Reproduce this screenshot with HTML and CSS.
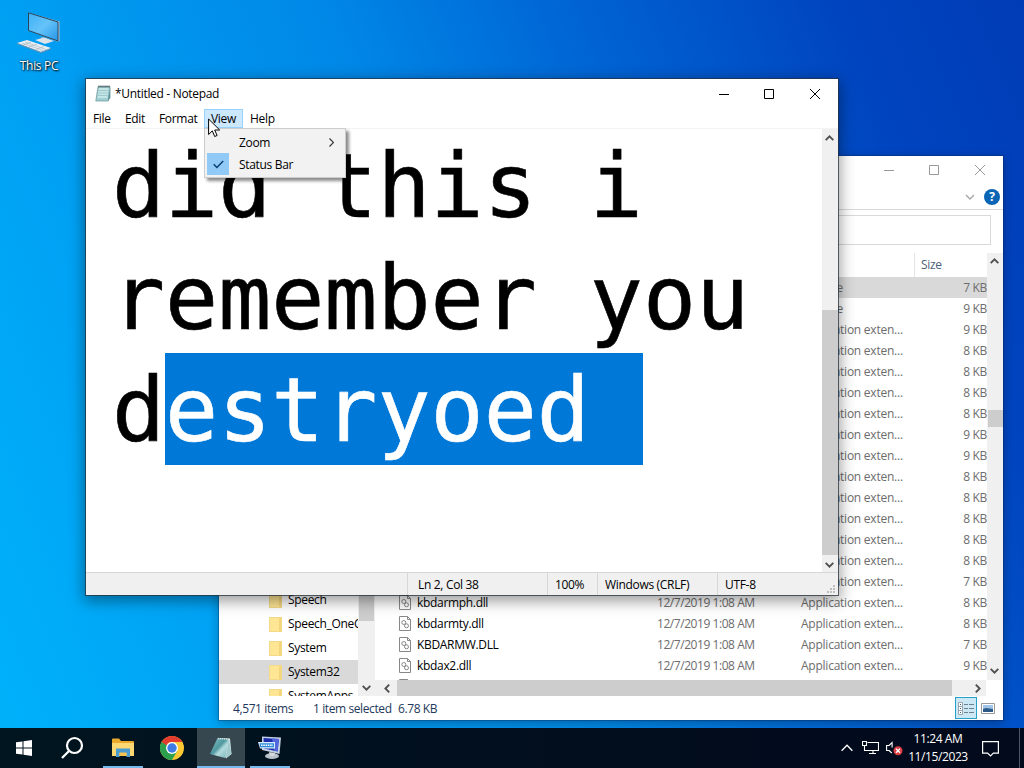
FILE: index.html
```html
<!DOCTYPE html>
<html lang="en">

<head>
  <meta charset="UTF-8">
  <meta name="viewport" content="width=device-width, initial-scale=1.0">
  <title>Desktop</title>
  <link rel="stylesheet" href="styles.css">
</head>

<body>
  <div class="desktop">

    <div class="shortcut">
      <svg width="44" height="42" viewBox="0 0 44 42">
        <defs>
          <linearGradient id="screen" x1="0" y1="0" x2="1" y2="1">
            <stop offset="0" stop-color="#3db0f5"/>
            <stop offset=".5" stop-color="#65c3fa"/>
            <stop offset="1" stop-color="#2396e8"/>
          </linearGradient>
        </defs>
        <path d="M11.500 .5L42.500 9.500V29L40 29.500L11.500 18.500z" fill="#b9c4cc"/>
        <path d="M11.500 .8L41 10V29L11.500 18.500z" fill="url(#screen)" stroke="#27445c"/>
        <path d="M24 25L31 27V30L24 28z" fill="#9aabb8"/>
        <path d="M18 28L27 25.500L37 29L28 32z" fill="#dde3e8"/>
        <path d="M0 31L10 28L34 36L24 40z" fill="#e9eef2"/>
        <path d="M0 31L24 40L34 36V37L24 41L0 32z" fill="#7391a8"/>
        <path d="M5 31L26 38.500M8 30L29 37.500M6 33L14 30M12 35L20 32M19 37.500L27 34.500" stroke="#a9b9c5" stroke-width=".7"/>
      </svg>
      <span>This PC</span>
    </div>

    <!-- explorer -->
    <div class="window explorer">
      <div class="ex-title">
        <svg class="caption" width="103" height="12" viewBox="0 0 103 12">
          <path d="M0 6.500H10M45.500 1.500h9v9h-9zM91 1l10 10M101 1l-10 10" fill="none" stroke="#999"/>
        </svg>
      </div>
      <div class="ribbon">
        <svg width="10" height="7" viewBox="0 0 10 7"><path d="M1 1l4 4 4-4" fill="none" stroke="#aaa" stroke-width="1.500"/></svg>
        <span class="help">?</span>
      </div>
      <div class="address"><div class="search"></div></div>
      <div class="ex-main">
        <div class="tree">
          <ul class="folders">
            <li><i class="folder"></i>Speech</li>
            <li><i class="folder"></i>Speech_OneCore</li>
            <li><i class="folder"></i>System</li>
            <li class="current"><i class="folder"></i>System32</li>
            <li><i class="folder"></i>SystemApps</li>
          </ul>
          <div class="scroll tree-scroll">
            <div class="thumb"></div>
            <svg width="9" height="6" viewBox="0 0 9 6"><path d="M.7 .8l3.800 3.800 3.800-3.800" fill="none" stroke="#505050" stroke-width="1.900"/></svg>
          </div>
        </div>
        <div class="files">
          <div class="files-body">
            <div class="list">
              <div class="head"><span></span><span></span><span></span><span class="size-head">Size</span></div>
              <div id="rows"></div>
            </div>
            <div class="scroll file-scroll">
              <svg width="9" height="6" viewBox="0 0 9 6"><path d="M.7 5.200l3.800-3.800 3.800 3.800" fill="none" stroke="#505050" stroke-width="1.900"/></svg>
              <div class="thumb"></div>
              <svg width="9" height="6" viewBox="0 0 9 6"><path d="M.7 .8l3.800 3.800 3.800-3.800" fill="none" stroke="#505050" stroke-width="1.900"/></svg>
            </div>
          </div>
          <div class="h-scroll">
            <svg width="6" height="9" viewBox="0 0 6 9"><path d="M5.200 .7L1.400 4.500l3.800 3.800" fill="none" stroke="#505050" stroke-width="1.900"/></svg>
            <div class="thumb"></div>
            <svg width="6" height="9" viewBox="0 0 6 9"><path d="M.8 .7l3.800 3.800L.8 8.300" fill="none" stroke="#505050" stroke-width="1.900"/></svg>
          </div>
        </div>
      </div>
      <div class="ex-status">
        <span class="count">4,571 items</span>
        <span class="selected">1 item selected</span>
        <span>6.78 KB</span>
        <div class="views">
          <span class="view on">
            <svg width="16" height="13" viewBox="0 0 16 13"><path d="M.5 .5h4v12h-4zM.5 4.500h4M.5 8.500h4" fill="#fff" stroke="#9aa5ad"/><path d="M2 2.500h1M2 6.500h1M2 10.500h1" stroke="#37617d"/><path d="M6 2.500h4M11 2.500h5M6 6.500h4M11 6.500h5M6 10.500h4M11 10.500h5" stroke="#6d818f"/></svg>
          </span>
          <svg width="14" height="11" viewBox="0 0 14 11"><path d="M.5 .5h13v10H.5z" fill="#fff" stroke="#999"/><path d="M2 2h10v7H2z" fill="#9fc4e8"/><path d="M2 6l3-1 7 1v3H2z" fill="#2c5a86"/></svg>
        </div>
      </div>
    </div>

    <!-- notepad -->
    <div class="window notepad">
      <div class="np-title">
        <svg width="16" height="17" viewBox="0 0 16 17">
          <path d="M3 1.500h12L13.500 16H.8z" fill="#9fcfd3" stroke="#6c9298" stroke-width=".7"/>
          <path d="M4 3h9.500l-1.200 10H2.500z" fill="#c4e6e7"/>
          <path d="M3.500 5.500h9.500M3.200 8h9.500M3 10.500h9.300" stroke="#8fbcc1" stroke-width=".7"/>
          <path d="M13 15.500L15.400 13V2l-1.700 9z" fill="#5d9197"/>
          <path d="M3.500 1.500h11" stroke="#3f4b4e" stroke-width="2" stroke-dasharray="1 1"/>
        </svg>
        <span>*Untitled - Notepad</span>
        <svg class="caption" width="103" height="12" viewBox="0 0 103 12">
          <path d="M0 6.500H10M45.500 1.500h9v9h-9zM91 1l10 10M101 1l-10 10" fill="none" stroke="#000"/>
        </svg>
      </div>
      <div class="menubar">
        <span class="m-file">File</span><span class="m-edit">Edit</span><span class="m-format">Format</span><span class="m-view">View</span><span class="m-help">Help</span>
      </div>
      <div class="np-body">
        <div class="text">
          <div class="line">did this i</div>
          <div class="line">remember you</div>
          <div class="line">d<mark>estryoed </mark></div>
        </div>
        <div class="scroll np-scroll">
          <svg width="9" height="6" viewBox="0 0 9 6"><path d="M.7 5.200l3.800-3.800 3.800 3.800" fill="none" stroke="#505050" stroke-width="1.900"/></svg>
          <div class="thumb"></div>
          <svg width="9" height="6" viewBox="0 0 9 6"><path d="M.7 .8l3.800 3.800 3.800-3.800" fill="none" stroke="#505050" stroke-width="1.900"/></svg>
        </div>
      </div>
      <div class="np-status">
        <span class="position">Ln 2, Col 38</span>
        <span class="percent">100%</span>
        <span class="ending">Windows (CRLF)</span>
        <span class="encoding">UTF-8</span>
        <svg width="9" height="9" viewBox="0 0 9 9"><path d="M6 0h2v2H6zM3 3h2v2H3zM6 3h2v2H6zM0 6h2v2H0zM3 6h2v2H3zM6 6h2v2H6z" fill="#bfbfbf"/></svg>
      </div>
    </div>

    <div class="dropdown">
      <div class="item"><i></i><span>Zoom</span>
        <svg width="5" height="9" viewBox="0 0 5 9"><path d="M.5 .5l4 4-4 4" fill="none" stroke="#333" stroke-width="1.100"/></svg>
      </div>
      <div class="item"><i class="check">
        <svg width="11" height="9" viewBox="0 0 11 9"><path d="M.7 4.200l3.200 3.200L10.200 1" fill="none" stroke="#003e6e" stroke-width="1.400"/></svg>
      </i><span>Status Bar</span></div>
    </div>

    <svg class="cursor" width="13" height="20" viewBox="0 0 13 20">
      <path d="M.6 1v15.500l3.700-3.600 2.400 5.600 2.400-1-2.400-5.500h5z" fill="#fff" stroke="#000" stroke-width="1"/>
    </svg>

    <!-- taskbar -->
    <div class="taskbar">
      <div class="task start">
        <svg width="16" height="16" viewBox="0 0 16 16"><path d="M0 2.300L6.500 1.400V7.500H0zM7.500 1.200L16 0V7.500H7.500zM0 8.500h6.500v6.100L0 13.700zM7.500 8.500H16V16l-8.500-1.200z" fill="#fff"/></svg>
      </div>
      <div class="task find">
        <svg width="24" height="24" viewBox="0 0 24 24"><circle cx="14.500" cy="9.500" r="7.500" fill="none" stroke="#fff" stroke-width="2.200"/><path d="M9 15L2 22" stroke="#fff" stroke-width="2.300"/></svg>
      </div>
      <div class="task open">
        <svg width="22" height="20" viewBox="0 0 22 20">
          <path d="M0 1.500q0-1 1-1h6l2 2.500h12q1 0 1 1V18H0z" fill="#e8a92c"/>
          <path d="M0 5h22v13H0z" fill="#fcd772"/>
          <path d="M4 10.500h14V19h-3.500v-4h-7v4H4z" fill="#4a9bd0"/>
          <path d="M7.500 14.500h7V18h-7z" fill="#f4c351"/>
        </svg>
      </div>
      <div class="task">
        <svg width="24" height="24" viewBox="0 0 24 24">
          <circle cx="12" cy="12" r="12" fill="#fcc934"/>
          <path d="M1.600 6A12 12 0 0 0 12 24L17.200 15 12 12z" fill="#2da04d"/>
          <path d="M1.600 6L7 15.200 9 8z" fill="#2da04d"/>
          <path d="M1.600 6A12 12 0 0 1 22.400 6H12q-4 0-5.300 3.200z" fill="#e33b2e"/>
          <circle cx="12" cy="12" r="6" fill="#fff"/>
          <circle cx="12" cy="12" r="4.700" fill="#3f7be4"/>
        </svg>
      </div>
      <div class="task open active">
        <svg width="24" height="22" viewBox="0 0 24 22">
          <defs>
            <linearGradient id="note" x1="0" y1="0" x2="1" y2="1">
              <stop offset="0" stop-color="#8fc7cc"/>
              <stop offset=".45" stop-color="#4f989f"/>
              <stop offset=".6" stop-color="#b4dcdf"/>
              <stop offset="1" stop-color="#6db0b6"/>
            </linearGradient>
          </defs>
          <path d="M9 1L21 1.500 22.500 17 17 21.500z" fill="#d8e9e8"/>
          <path d="M8.500 1L20 2.500 16 21 1 17z" fill="url(#note)"/>
          <path d="M20 2.500L22.500 17 16.500 21z" fill="#9fc9cc"/>
          <path d="M9 1.500L20 2.500" stroke="#d9e4e4" stroke-width="1.300" stroke-dasharray="1 1"/>
        </svg>
      </div>
      <div class="task open">
        <svg width="24" height="24" viewBox="0 0 24 24">
          <path d="M4 .5L23 1.500 21.500 18 4 14z" fill="#c4d1e5"/>
          <path d="M5.500 2L21 3 19.500 15.500 6 12.500z" fill="#1b2fae"/>
          <path d="M14 2.600L21 3 19.500 15.500 16 14.500z" fill="#5267dc"/>
          <ellipse cx="14" cy="20" rx="7" ry="3" fill="#bac2cc"/>
          <path d="M11 16l6 1-1 3h-4z" fill="#d8dce1"/>
          <path d="M0 6h17v6.500H2z" fill="#dcebfa"/>
          <path d="M1.500 7.200h14.500v4H2z" fill="#2e8ddb"/>
          <path d="M3 9.200h12" stroke="#fff" stroke-width="1.600" stroke-dasharray="1.500 .8"/>
        </svg>
      </div>
      <div class="tray">
        <svg width="12" height="8" viewBox="0 0 12 8"><path d="M.6 6.800L6 1.300l5.400 5.500" fill="none" stroke="#fff" stroke-width="1.300"/></svg>
        <svg class="net" width="17" height="14" viewBox="0 0 17 14"><path d="M5.500 1.500h11v8h-11M.5 .5h4v4h-4zM2.500 4.500v5h3M11 9.500v3M7 12.500h7" fill="none" stroke="#fff" stroke-width="1.100"/></svg>
        <svg width="17" height="15" viewBox="0 0 17 15"><path d="M5.800 12L3.100 9.500H.6v-5h2.500l3-3v5" fill="none" stroke="#fff" stroke-width="1.100"/><circle cx="12" cy="9.800" r="4.500" fill="#dc3d42"/><path d="M10 7.800l4 4M14 7.800l-4 4" stroke="#fff" stroke-width="1.400"/></svg>
        <div class="clock"><div class="time">11:24 AM</div><div class="date">11/15/2023</div></div>
        <svg class="notice" width="17" height="17" viewBox="0 0 17 17"><path d="M.6 1.600h15.800v11.500h-5l-2.900 2.900-2.900-2.900h-5z" fill="none" stroke="#fff" stroke-width="1.200"/></svg>
        <div class="peek"></div>
      </div>
    </div>

  </div>
  <script>
    const rows = document.getElementById('rows');
    const ext = 'Application exten...';
    const day = '12/7/2019 1:08 AM';
    // names and dates are only needed for the rows below the notepad window
    const files = [
      ['', '', 'NLS File', 7], ['', '', 'NLS File', 9],
      ['', '', ext, 9], ['', '', ext, 8], ['', '', ext, 8], ['', '', ext, 8], ['', '', ext, 8],
      ['', '', ext, 9], ['', '', ext, 9],
      ['', '', ext, 8], ['', '', ext, 8], ['', '', ext, 8], ['', '', ext, 8], ['', '', ext, 8],
      ['', '', ext, 7],
      ['kbdarmph.dll', day, ext, 8],
      ['kbdarmty.dll', day, ext, 8],
      ['KBDARMW.DLL', day, ext, 7],
      ['kbdax2.dll', day, ext, 9],
      [' ', '', '', '']
    ];
    const icon = '<svg width="12" height="15" viewBox="0 0 12 15"><path d="M.5 .5h8l3 3v11H.5z" fill="#fff" stroke="#888"/>' +
      '<path d="M8.500 .5v3h3" fill="none" stroke="#888"/><circle cx="4.800" cy="6.500" r="2" fill="none" stroke="#888"/>' +
      '<circle cx="7.500" cy="9.800" r="2" fill="none" stroke="#888"/></svg>';

    for (let i = 0; i < files.length; i++) {
      const f = files[i];
      rows.innerHTML += '<div class="row' + (i === 0 ? ' picked' : '') + '"><span class="name">' + (f[0] ? icon : '') + f[0] +
        '</span><span class="modified">' + f[1] + '</span><span class="type">' + f[2] + '</span><span class="size">' + (f[3] ? f[3] + ' KB' : '') + '</span></div>';
    }
  </script>
</body>

</html>
```
FILE: styles.css
```css
* {
  box-sizing: border-box;
}

body {
  margin: 0;
  overflow: hidden;
  font-family: "Open Sans", "Noto Sans", sans-serif;
  font-size: 12px;
  letter-spacing: -0.32px;
  color: #000;
}

svg {
  display: block;
  flex: none;
}

.desktop {
  position: relative;
  width: 1024px;
  height: 768px;
  overflow: hidden;
  background: linear-gradient(68deg, #00b2fa 0%, #00a1f4 22%, #0088e7 47%, #0062d3 67%, #0044bf 86%, #003cb6 100%);
}

.shortcut {
  position: absolute;
  left: 2px;
  top: 12px;
  width: 74px;
  display: flex;
  flex-direction: column;
  align-items: center;
  color: #fff;
  text-shadow: 1px 1px 2px #000, 0 0 2px #000;
}

.shortcut span {
  line-height: 16px;
  margin-top: 4px;
}

.window {
  position: absolute;
  display: flex;
  flex-direction: column;
  background: #fff;
}

/* explorer */
.explorer {
  left: 219px;
  top: 156px;
  width: 784px;
  height: 564px;
  box-shadow: 0 0 0 1px rgba(0, 30, 80, .3), 0 3px 10px rgba(0, 0, 0, .3);
}

.ex-title {
  height: 29px;
  display: flex;
}

.caption {
  margin-left: auto;
}

.ex-title .caption {
  margin-top: 8px;
  margin-right: 16px;
}

.ribbon {
  height: 25px;
  display: flex;
  align-items: center;
  justify-content: flex-end;
  gap: 9px;
  padding-right: 3px;
  border-bottom: 1px solid #d9d9d9;
}

.help {
  width: 16px;
  height: 16px;
  border-radius: 50%;
  background: #0a66b4;
  color: #fff;
  font-weight: 700;
  line-height: 16px;
  text-align: center;
}

.address {
  height: 43px;
  padding: 5px 12px 0 400px;
}

.search {
  height: 30px;
  border: 1px solid #d9d9d9;
}

.ex-main {
  height: 443px;
  display: flex;
  overflow: hidden;
}

.tree {
  width: 156px;
  display: flex;
}

.folders {
  width: 139px;
  margin: 335px 0 0;
  padding: 0;
  list-style: none;
  overflow: hidden;
}

.folders li {
  height: 24px;
  line-height: 24px;
  display: flex;
  align-items: center;
  padding-left: 50px;
  gap: 6px;
  white-space: nowrap;
}

.folders .current {
  background: #d9d9d9;
}

.folder {
  width: 13px;
  height: 15px;
  flex: none;
  background: linear-gradient(90deg, #ffe694 0 80%, #f3d57a 80%);
  border: 1px solid #f3d98a;
}

.scroll {
  width: 17px;
  background: #f0f0f0;
  display: flex;
  flex-direction: column;
  align-items: center;
}

.thumb {
  background: #cdcdcd;
}

.tree-scroll .thumb {
  width: 15px;
  height: 368px;
}

.tree-scroll svg {
  margin-top: auto;
  margin-bottom: 5px;
}

.files {
  flex: 1;
  display: flex;
  flex-direction: column;
}

.files-body {
  height: 427px;
  display: flex;
}

.list {
  width: 612px;
  overflow: hidden;
}

.head,
.row {
  display: grid;
  grid-template-columns: 276px 144px 119px 73px;
}

.head {
  height: 24px;
  line-height: 24px;
  color: #4c607a;
}

.size-head {
  border-left: 1px solid #e5e5e5;
  padding-left: 6px;
}

.row {
  height: 21px;
  line-height: 21px;
  color: #6d6d6d;
  white-space: nowrap;
}

.picked {
  background: #d9d9d9;
}

.name {
  display: flex;
  align-items: center;
  gap: 6px;
  padding-left: 24px;
  color: #000;
}

.modified {
  padding-left: 6px;
  letter-spacing: -0.44px;
}

.type {
  padding-left: 6px;
  letter-spacing: -0.24px;
}

.size {
  text-align: right;
}

.file-scroll {
  width: 16px;
}

.file-scroll svg:first-child {
  margin: 5px 1px 0 0;
}

.file-scroll .thumb {
  width: 15px;
  height: 17px;
  margin-top: 146px;
}

.file-scroll svg:last-child {
  margin: auto 1px 6px 0;
}

.h-scroll {
  height: 16px;
  width: 611px;
  display: flex;
  align-items: center;
  padding: 0 5px 0 9px;
  background: #f0f0f0;
}

.h-scroll .thumb {
  width: 555px;
  height: 16px;
  margin-left: 7px;
}

.h-scroll svg:last-child {
  margin-left: auto;
}

.ex-status {
  flex: 1;
  display: flex;
  align-items: center;
  padding: 0 8px 0 14px;
  color: #1e395b;
  letter-spacing: -0.4px;
}

.count {
  width: 80px;
}

.selected {
  width: 85px;
}

.views {
  margin-left: auto;
  display: flex;
  align-items: center;
  gap: 4px;
}

.view.on {
  width: 22px;
  height: 22px;
  display: flex;
  align-items: center;
  justify-content: center;
  background: #cce8f5;
  border: 1px solid #26a0c8;
}

/* notepad */
.notepad {
  left: 86px;
  top: 79px;
  width: 752px;
  height: 516px;
  box-shadow: 0 0 0 1px rgba(40, 50, 60, .75), 0 4px 14px 2px rgba(0, 0, 0, .4);
}

.np-title {
  height: 30px;
  display: flex;
  align-items: center;
  padding: 0 16px 1px 9px;
  gap: 4px;
}

.menubar {
  height: 20px;
  display: flex;
  line-height: 19px;
  border-bottom: 1px solid #f4f4f4;
}

.menubar span {
  padding-left: 7px;
}

.m-file {
  width: 32px;
}

.m-edit {
  width: 34px;
}

.m-format {
  width: 52px;
}

.menubar .m-view {
  width: 39px;
  padding-left: 6px;
  line-height: 18px;
  background: #cce8ff;
  border: 1px solid #99d1ff;
}

.m-help {
  width: 40px;
}

.np-body {
  height: 443px;
  display: flex;
}

.text {
  width: 736px;
  padding-left: 26px;
  font-family: "DejaVu Sans Mono", monospace;
  font-size: 88.200px;
  letter-spacing: 0;
  -webkit-text-stroke: 0.6px;
}

.line {
  height: 112px;
  line-height: 115px;
  white-space: pre;
}

.line mark {
  display: inline-block;
  height: 112px;
  vertical-align: top;
  background: #0078d7;
  color: #fff;
}

.np-scroll {
  width: 16px;
}

.np-scroll svg:first-child {
  margin: 6px 1px 0 0;
}

.np-scroll .thumb {
  width: 16px;
  height: 245px;
  margin-top: 169px;
}

.np-scroll svg:last-child {
  margin: auto 1px 4px 0;
}

.np-status {
  flex: 1;
  display: flex;
  line-height: 24px;
  padding-left: 321px;
  background: #f0f0f0;
  border-top: 1px solid #d7d7d7;
}

.np-status span {
  height: 22px;
  border-left: 1px solid #d7d7d7;
  padding-left: 10px;
}

.position {
  width: 140px;
}

.np-status .percent {
  width: 50px;
  padding-left: 7px;
}

.np-status .ending {
  width: 120px;
  padding-left: 7px;
}

.np-status .encoding {
  width: 110px;
  padding-left: 7px;
}

.np-status svg {
  margin-top: 12px;
}

.dropdown {
  position: absolute;
  left: 204px;
  top: 128px;
  width: 142px;
  height: 50px;
  padding: 2px;
  background: #f2f2f2;
  border: 1px solid #ccc;
  box-shadow: 3px 3px 3px rgba(0, 0, 0, .45);
}

.item {
  height: 22px;
  line-height: 21px;
  display: flex;
  align-items: center;
}

.item span {
  height: 22px;
  padding-top: 1px;
}

.item i {
  width: 22px;
  height: 22px;
  margin-right: 10px;
}

.item .check {
  display: flex;
  align-items: center;
  justify-content: center;
  background: #91c9f7;
}

.item > svg {
  margin-left: auto;
  margin-right: 9px;
}

.cursor {
  position: absolute;
  left: 208px;
  top: 118px;
}

/* taskbar */
.taskbar {
  position: absolute;
  left: 0;
  right: 0;
  bottom: 0;
  height: 40px;
  display: flex;
  background: linear-gradient(90deg, #00151f, #020c1d 70%, #020a1c);
}

.task {
  width: 48px;
  display: flex;
  align-items: center;
  justify-content: center;
  margin-right: 1px;
}

.start {
  margin-right: 0;
}

.find {
  margin-right: 3px;
}

.open {
  background: linear-gradient(#76b9ed, #76b9ed) center bottom / 40px 2px no-repeat;
}

.active {
  background: linear-gradient(#76b9ed, #76b9ed) center bottom / 48px 2px no-repeat, #37474f;
}

.tray {
  margin-left: auto;
  display: flex;
  align-items: center;
  color: #fff;
}

.net {
  margin: 0 7px 0 9px;
}

.clock {
  width: 76px;
  text-align: center;
  line-height: 18px;
  letter-spacing: -0.4px;
  margin-left: -3px;
}

.notice {
  margin-left: 6px;
  margin-right: 20px;
}

.peek {
  width: 5px;
  height: 40px;
  border-left: 1px solid #4d5663;
}
```
